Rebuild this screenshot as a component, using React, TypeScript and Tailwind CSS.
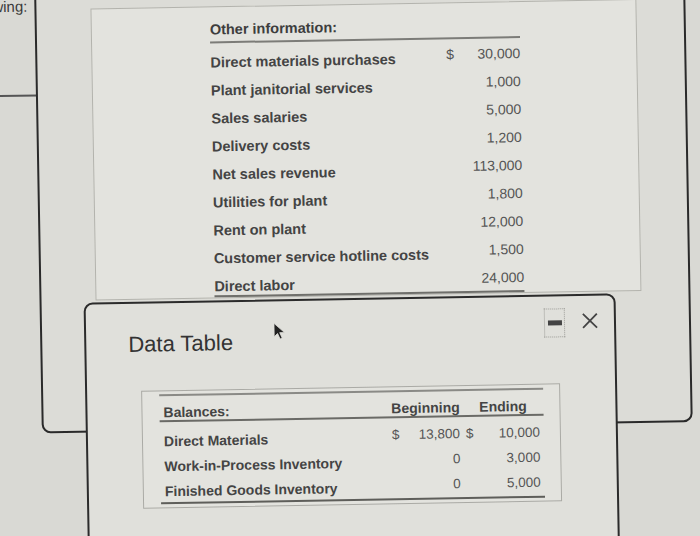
import React from "react";

const otherInfo = [
  { label: "Direct materials purchases", dollar: true, value: "30,000" },
  { label: "Plant janitorial services", value: "1,000" },
  { label: "Sales salaries", value: "5,000" },
  { label: "Delivery costs", value: "1,200" },
  { label: "Net sales revenue", value: "113,000" },
  { label: "Utilities for plant", value: "1,800" },
  { label: "Rent on plant", value: "12,000" },
  { label: "Customer service hotline costs", value: "1,500" },
  { label: "Direct labor", value: "24,000" },
];

const balances = [
  { label: "Direct Materials", begin: "13,800", end: "10,000", dollar: true },
  { label: "Work-in-Process Inventory", begin: "0", end: "3,000" },
  { label: "Finished Goods Inventory", begin: "0", end: "5,000" },
];

const App: React.FC = () => {
  return (
    <div className="w-[700px] h-[536px] overflow-hidden bg-[#d9d9d4] font-['Liberation_Sans',Arial,sans-serif]">
      <div className="relative w-[700px] h-[536px] -rotate-1">
        {/* cut-off text of the page behind */}
        <div className="absolute right-[668px] top-[-8px] text-[15px] leading-[18px] text-[#3a3a3a] whitespace-nowrap">
          the following:
        </div>
        <div className="absolute left-[-10px] top-[89px] w-[50px] h-[1.5px] bg-[#555]" />

        {/* back window */}
        <div className="absolute left-[39px] top-[-20px] w-[651px] h-[448px] border-2 border-[#2a2a2a] rounded-b-[9px] bg-[#dcdcd7]">
          <div className="ml-[54px] mt-[22px] w-[546px] h-[292px] border border-[#b3b3ad] bg-[#e3e3de]">
            <div className="pl-[118px] pt-[10px] w-[428px]">
              <div className="h-[22px] flex items-center text-[14.5px] font-bold text-[#3d3d3d]">
                <span className="mt-[3px]">Other information:</span>
              </div>
              <div className="mt-[2px] w-[310px] h-[2px] bg-[#7c7c78]" />
              <div className="mt-[1px] w-[310px]">
                {otherInfo.map((row) => (
                  <div
                    key={row.label}
                    className="h-[28px] grid grid-cols-[236px_8px_66px] items-center"
                  >
                    <span className="mt-[8px] text-[14.5px] font-bold text-[#444] whitespace-nowrap">
                      {row.label}
                    </span>
                    <span className="text-[14px] text-[#555]">
                      {row.dollar ? "$" : ""}
                    </span>
                    <span className="text-[14px] text-[#555] text-right">
                      {row.value}
                    </span>
                  </div>
                ))}
              </div>
              <div className="-mt-[1px] w-[310px] h-[2px] bg-[#6f6f6b]" />
            </div>
          </div>
        </div>

        {/* Data Table modal */}
        <div className="absolute left-[83px] top-[298px] w-[532px] h-[260px] border-2 border-[#2b2b2b] rounded-t-[9px] bg-[#e0e0db]">
          <div className="flex justify-between items-start pt-[12px] pl-[42px] pr-[15px]">
            <div className="mt-[15px] text-[22px] leading-[28px] text-[#333]">
              Data Table
            </div>
            <div className="flex items-start gap-[16px]">
              <div className="w-[21px] h-[29px] border border-dotted border-[#9c9c97] flex items-center justify-center">
                <div className="w-[14px] h-[5px] bg-[#444]" />
              </div>
              <svg className="mt-[4px]" width="18" height="18" viewBox="0 0 18 18">
                <path d="M2 2 L16 16 M16 2 L2 16" stroke="#444" strokeWidth="1.8" fill="none" />
              </svg>
            </div>
          </div>

          <div className="ml-[54px] mt-[32px] w-[419px] border border-[#aaaaa5] bg-[#e3e3de] pt-[3px] pl-[17px] pb-[3px]">
            <div className="w-[384px]">
              <div className="h-[2px] bg-[#8a8a86]" />
              <div className="h-[24px] grid grid-cols-[229px_74px_81px] items-end text-[14px] leading-[16px] font-bold text-[#444]">
                <span className="pl-[4px]">Balances:</span>
                <span className="text-center">Beginning</span>
                <span className="text-center">Ending</span>
              </div>
              <div className="h-[2px] bg-[#6a6a66]" />
              <div className="pt-[5px]">
                {balances.map((row) => (
                  <div
                    key={row.label}
                    className="h-[25px] grid grid-cols-[229px_74px_81px] items-center"
                  >
                    <span className="mt-[4px] pl-[4px] text-[14px] font-bold text-[#444] whitespace-nowrap">
                      {row.label}
                    </span>
                    <span className="flex justify-between pl-[3px] pr-[3px] text-[13.5px] text-[#555]">
                      <span>{row.dollar ? "$" : ""}</span>
                      <span>{row.begin}</span>
                    </span>
                    <span className="flex justify-between pl-[3px] pr-[4px] text-[13.5px] text-[#555]">
                      <span>{row.dollar ? "$" : ""}</span>
                      <span>{row.end}</span>
                    </span>
                  </div>
                ))}
              </div>
              <div className="h-[2px] bg-[#5e5e5a]" />
            </div>
          </div>

          {/* mouse pointer */}
          <svg
            className="absolute left-[187px] top-[21px]"
            width="13"
            height="18"
            viewBox="0 0 13 18"
          >
            <path d="M1 1 L1 14.5 L4.4 11.2 L6.9 16.8 L9 15.9 L6.6 10.4 L11.4 10.4 Z" fill="#222" stroke="#e0e0db" strokeWidth="0.8" />
          </svg>
        </div>
      </div>
    </div>
  );
};

export default App;
